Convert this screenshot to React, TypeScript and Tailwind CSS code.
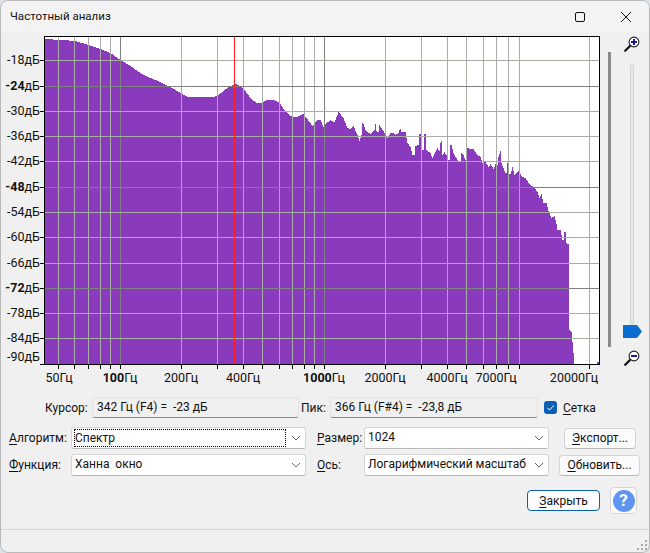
const font = "font-['Roboto','Noto_Sans',sans-serif]";

const spectrum: [number, number][] = [
  [44, 39], [62, 40], [75, 41], [88, 45], [100, 49], [110, 53], [120, 60], [130, 66], [140, 73], [150, 78],
  [160, 82], [170, 87], [180, 93], [188, 97], [212, 97], [217, 96], [224, 90], [230, 86], [235, 84], [240, 86],
  [244, 90], [250, 98], [256, 103], [261, 103], [266, 100], [274, 100], [279, 103], [284, 110], [290, 116], [296, 117],
  [303, 114], [306, 118], [312, 126], [314, 123], [317, 120], [320, 120], [323, 127], [326, 123], [330, 120], [334, 122],
  [338, 112], [343, 118], [347, 128], [350, 129], [353, 126], [357, 135], [359, 141], [361, 135], [362, 123], [363, 124], [365, 130], [367, 132],
  [370, 134], [374, 130], [375, 124], [376, 131], [378, 132], [379, 125], [381, 128], [384, 133], [387, 138], [390, 133], [393, 133], [395, 135], [398, 133],
  [399, 130], [400, 129], [401, 132], [405, 132], [407, 143], [410, 147], [412, 155], [414, 155], [415, 146], [418, 145], [419, 134], [420, 134], [421, 150], [423, 150], [424, 134], [425, 134],
  [426, 150], [430, 153], [432, 158], [436, 150], [437, 148], [439, 151], [440, 143], [441, 141], [442, 155], [444, 152], [446, 155], [447, 160],
  [449, 160], [450, 145], [451, 145], [453, 153], [455, 157], [458, 161], [460, 161], [461, 153], [463, 155], [465, 160], [466, 160], [467, 148], [470, 149], [473, 149],
  [477, 155], [480, 157], [482, 163], [485, 162], [488, 167], [490, 164], [493, 169], [495, 164], [497, 165], [498, 157],
  [500, 151], [501, 163], [504, 171], [505, 173], [506, 173], [507, 163], [508, 173], [510, 174], [512, 167], [514, 175], [516, 173], [518, 171], [521, 176],
  [525, 178], [528, 183], [534, 188], [537, 192], [539, 198], [541, 194], [543, 203], [546, 203], [548, 211], [551, 218],
  [554, 216], [556, 224], [557, 230], [560, 230], [562, 240], [563, 240], [564, 232], [565, 232], [566, 243], [569, 245], [569, 330], [571, 332], [572, 342],
  [574, 364],
];

// one px columns, like the stepped bars of the real plot
const columns = () => {
  let d = "M44 364";
  for (let i = 0; i < spectrum.length - 1; i++) {
    const [x1, y1] = spectrum[i];
    const [x2, y2] = spectrum[i + 1];
    for (let x = x1; x < x2; x++) {
      const y = Math.round(y1 + ((y2 - y1) * (x - x1)) / (x2 - x1));
      d += ` L${x} ${y} L${x + 1} ${y}`;
    }
  }
  return `${d} L574 364 Z`;
};

const gridX = [58, 74, 88, 100, 110, 181, 217, 243, 262, 279, 292, 304, 314, 385, 421, 447, 466, 483, 496, 508, 519, 589];
const darkX = [120, 324];
const gridY = [60, 111, 136, 161, 212, 237, 263, 313, 338];
const darkY = [86, 187, 288];

const dbLabels: [string, number, number, boolean][] = [
  ["-18", 60, 60, false], ["-24", 86, 86, true], ["-30", 111, 111, false], ["-36", 136, 136, false], ["-42", 161, 161, false],
  ["-48", 187, 187, true], ["-54", 212, 212, false], ["-60", 237, 237, false], ["-66", 263, 263, false], ["-72", 288, 288, true],
  ["-78", 313, 313, false], ["-84", 338, 338, false], ["-90", 357, 364, false],
];

const hzLabels: [string, number, boolean][] = [
  ["50", 59, false], ["100", 120, true], ["200", 181, false], ["400", 243, false], ["1000", 324, true],
  ["2000", 385, false], ["4000", 447, false], ["7000", 496, false], ["20000", 574, false],
];

const Spectrum = () => (
  <svg width="600" height="358" viewBox="0 32 600 358" className="shrink-0">
    <rect x="44.5" y="36.5" width="555" height="328" fill="#fff" stroke="#000" />
    <path d={columns()} fill="#8a3bbd" shapeRendering="crispEdges" />
    <rect x="597" y="362" width="2" height="2" fill="#8a3bbd" />
    {gridX.map((x) => (
      <line key={x} x1={x + 0.5} x2={x + 0.5} y1="37" y2="364" stroke="#aaada6" />
    ))}
    {darkX.map((x) => (
      <line key={x} x1={x + 0.5} x2={x + 0.5} y1="37" y2="364" stroke="#808080" />
    ))}
    {gridY.map((y) => (
      <line key={y} x1="45" x2="599" y1={y + 0.5} y2={y + 0.5} stroke="#a9ada6" />
    ))}
    {darkY.map((y) => (
      <line key={y} x1="45" x2="599" y1={y + 0.5} y2={y + 0.5} stroke="#808080" />
    ))}
    <line x1="234.5" x2="234.5" y1="37" y2="364" stroke="#ff1f1f" />
    <rect x="44.5" y="36.5" width="555" height="328" fill="none" stroke="#000" />
    {dbLabels.map(([label, y, tick, bold]) => (
      <g key={label}>
        <line x1="40" x2="44" y1={tick + 0.5} y2={tick + 0.5} stroke="#000" />
        <text x="40" y={y + 4} textAnchor="end" fontSize="12.5" fill="#111">
          <tspan fontWeight={bold ? 700 : 400}>{label}</tspan>дБ
        </text>
      </g>
    ))}
    {[...gridX, ...darkX].map((x) => (
      <line key={x} x1={x + 0.5} x2={x + 0.5} y1="365" y2="369" stroke="#000" />
    ))}
    {hzLabels.map(([label, x, bold]) => (
      <text key={label} x={x} y="382" textAnchor="middle" fontSize="12.5" fill="#111">
        <tspan fontWeight={bold ? 700 : 400}>{label}</tspan>Гц
      </text>
    ))}
  </svg>
);

const ZoomIcon = ({ minus }: { minus?: boolean }) => (
  <svg width="16" height="16" viewBox="0 0 16 16" className="shrink-0">
    <path d="M1.2 14.8 L6.5 9.5" stroke="#111" strokeWidth="2.2" strokeLinecap="round" />
    <circle cx="10" cy="6" r="4.9" fill="#fff" stroke="#222" strokeWidth="1.1" />
    <rect x="7" y="5" width="6" height="2" fill="#1a1a9c" />
    {!minus && <rect x="9" y="3" width="2" height="6" fill="#1a1a9c" />}
  </svg>
);

const Slider = () => (
  <div className="flex flex-col items-center w-[40px] ml-[4px] h-[330px] mt-[4px]">
    <ZoomIcon />
    <div className="relative w-[4px] flex-1 bg-[#e3e6e3] border border-[#d3d6d3] mt-[13px] mb-[12px]">
      <svg width="19" height="13" viewBox="0 0 19 13" className="absolute left-[-8px] top-[259px]">
        <path d="M0 0 H14 L19 6.5 L14 13 H0 Z" fill="#0a6ed1" />
      </svg>
    </div>
    <ZoomIcon minus />
  </div>
);

const Field = ({ text, width }: { text: string; width: string }) => (
  <div className={`h-[21px] ${width} bg-[#f0f0f0] border border-[#e3e3e3] border-b-[#8a8a8a] rounded-[3px] pl-[4px] leading-[18px] text-[12px] whitespace-pre`}>
    {text}
  </div>
);

const Select = ({ text, width, focus }: { text: string; width: string; focus?: boolean }) => (
  <div className={`h-[22px] ${width} bg-white border border-[#d5d5d5] border-b-[#b5b5b5] rounded-[3px] flex items-center pl-[2px] pr-[4px] text-[12px] whitespace-pre`}>
    <span className={`flex-1 h-[18px] leading-[16px] ${focus ? "border border-dotted border-black" : "pl-[1px]"}`}>{text}</span>
    <svg width="10" height="6" viewBox="0 0 10 6" className="ml-[5px]">
      <path d="M1 1 L5 5 L9 1" fill="none" stroke="#666" />
    </svg>
  </div>
);

const Button = ({ u, rest, width, primary }: { u: string; rest: string; width: string; primary?: boolean }) => (
  <div
    className={`h-[21px] ${width} rounded-[4px] flex items-center justify-center text-[12px] ${
      primary ? "bg-[#fdfdfd] border border-[#0a5fb4]" : "bg-[#fbfbfb] border border-[#d5d5d5] border-b-[#b8b8b8]"
    }`}
  >
    <span>
      <u className="underline-offset-2">{u}</u>
      {rest}
    </span>
  </div>
);

const Label = ({ u, rest, width }: { u: string; rest: string; width: string }) => (
  <div className={`${width} text-[12px] shrink-0`}>
    <u className="underline-offset-2">{u}</u>
    {rest}
  </div>
);

export default function App() {
  return (
    <div className={`w-[650px] h-[553px] bg-[#dfe3e6] ${font} text-[#111]`}>
      <div className="w-[650px] h-[553px] rounded-[8px] overflow-hidden bg-[#f0f0f0] border border-[#b9b9b9] flex flex-col">
        <div className="h-[31px] shrink-0 bg-[#f3f3f3] flex items-center pl-[9px]">
          <span className="text-[11.5px] flex-1">Частотный анализ</span>
          <svg width="12" height="12" viewBox="0 0 12 12" className="mr-[34px]">
            <rect x="1.5" y="1.5" width="9" height="9" rx="1.5" fill="none" stroke="#111" />
          </svg>
          <svg width="12" height="12" viewBox="0 0 12 12" className="mr-[17px]">
            <path d="M1 1 L11 11 M11 1 L1 11" stroke="#111" />
          </svg>
        </div>

        <div className="flex h-[358px] shrink-0 -ml-[1px]">
          <Spectrum />
          <div className="w-[3px] h-[295px] mt-[20px] ml-[8px] bg-[#8a8a8a]" />
          <Slider />
        </div>

        <div className="flex items-center h-[21px] mt-[7px] pl-[44px]">
          <span className="text-[12px] w-[47px]">Курсор:</span>
          <Field text="342 Гц (F4) =  -23 дБ" width="w-[207px]" />
          <span className="text-[12px] w-[29px] ml-[2px]">Пик:</span>
          <Field text="366 Гц (F#4) =  -23,8 дБ" width="w-[208px]" />
          <svg width="13" height="13" viewBox="0 0 13 13" className="ml-[6px]">
            <rect width="13" height="13" rx="3" fill="#0a5fb4" />
            <path d="M3.5 6.8 L5.6 9 L9.8 4.4" fill="none" stroke="#fff" />
          </svg>
          <span className="text-[12px] ml-[6px]">
            <u className="underline-offset-2">С</u>етка
          </span>
        </div>

        <div className="flex items-center h-[22px] mt-[9px] pl-[8px]">
          <Label u="А" rest="лгоритм:" width="w-[62px]" />
          <Select text="Спектр" width="w-[235px]" focus />
          <Label u="Р" rest="азмер:" width="w-[47px] ml-[11px]" />
          <Select text="1024" width="w-[185px]" />
          <Button u="Э" rest="кспорт..." width="w-[72px] ml-[15px]" />
        </div>

        <div className="flex items-center h-[22px] mt-[5px] pl-[8px]">
          <Label u="Ф" rest="ункция:" width="w-[62px]" />
          <Select text="Ханна  окно" width="w-[235px]" />
          <Label u="О" rest="сь:" width="w-[47px] ml-[11px]" />
          <Select text="Логарифмический масштаб" width="w-[185px]" />
          <Button u="О" rest="бновить..." width="w-[81px] ml-[10px]" />
        </div>

        <div className="flex items-center justify-end h-[27px] mt-[11px] pr-[12px]">
          <Button u="З" rest="акрыть" width="w-[73px]" primary />
          <div className="w-[27px] h-[27px] ml-[10px] bg-[#fbfbfb] border border-[#d5d5d5] rounded-[4px] flex items-center justify-center">
            <div className="w-[22px] h-[22px] rounded-full bg-[#5f95f0] text-white text-[17px] font-bold flex items-center justify-center">?</div>
          </div>
        </div>

        <div className="mt-auto h-[23px] border-t border-[#d6d6d6] relative">
          <svg width="12" height="12" viewBox="0 0 12 12" className="absolute right-[1px] bottom-[1px]">
            <g fill="#a8a8a8">
              <rect x="9" y="1" width="2" height="2" />
              <rect x="5" y="5" width="2" height="2" />
              <rect x="9" y="5" width="2" height="2" />
              <rect x="1" y="9" width="2" height="2" />
              <rect x="5" y="9" width="2" height="2" />
              <rect x="9" y="9" width="2" height="2" />
            </g>
          </svg>
        </div>
      </div>
    </div>
  );
}
